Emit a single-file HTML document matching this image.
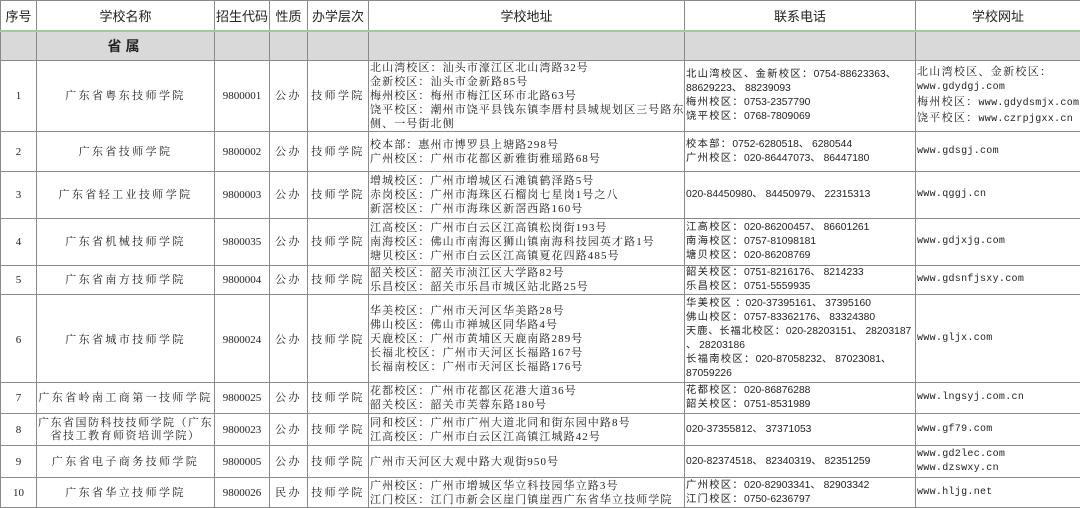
<!DOCTYPE html>
<html><head><meta charset="utf-8"><style>
html,body{margin:0;padding:0;background:#fff;width:1080px;height:503px;overflow:hidden}
table{border-collapse:collapse;table-layout:fixed;position:absolute;left:0;top:0;width:1080px}
td{border:1px solid #8a8a8a;padding:0 1px;font:11px/14px "Liberation Serif","Noto Serif CJK SC","Noto Sans CJK SC",serif;color:#222;vertical-align:middle;overflow:hidden;white-space:nowrap;box-sizing:border-box}
.c{text-align:center}
.h td{font:13px "Liberation Sans","Noto Sans CJK SC",sans-serif;text-align:center;color:#222;border-bottom:2px solid #9ccc9c}
.g td{background:#d9d9d9}
.a{letter-spacing:1.1px}
.n{letter-spacing:2.4px}
.u{font-family:"Liberation Mono","Noto Sans CJK SC",monospace;font-size:10px;letter-spacing:0.3px}
.ph{font-family:"Liberation Sans","Noto Sans CJK SC",sans-serif;font-size:10.3px}
.ph .a{letter-spacing:1.3px}
td.gl{border-left:1px solid #7cb87c}
.s{font-family:'Liberation Serif','Noto Serif CJK SC',serif;font-size:11px;letter-spacing:1.3px}
</style></head><body>
<table>
<colgroup><col style="width:36px"><col style="width:178px"><col style="width:55px"><col style="width:38px"><col style="width:61px"><col style="width:316px"><col style="width:231px"><col style="width:165px"></colgroup>
<tr class="h" style="height:30px"><td>序号</td><td>学校名称</td><td class="gl">招生代码</td><td>性质</td><td>办学层次</td><td>学校地址</td><td>联系电话</td><td>学校网址</td></tr>
<tr class="g" style="height:30px"><td></td><td class="c" style="font:bold 14px 'Noto Sans CJK SC',sans-serif;letter-spacing:4px">省属</td><td class="gl"></td><td></td><td></td><td></td><td></td><td></td></tr>
<tr style="height:71px"><td class="c">1</td><td class="c n">广东省粤东技师学院</td><td class="c gl">9800001</td><td class="c n">公办</td><td class="c n">技师学院</td><td class="a">北山湾校区：汕头市濠江区北山湾路32号<br>金新校区：汕头市金新路85号<br>梅州校区：梅州市梅江区环市北路63号<br>饶平校区：潮州市饶平县钱东镇李厝村县城规划区三号路东<br>侧、一号街北侧</td><td class="ph"><span class="a">北山湾校区、金新校区：</span>0754-88623363、<br>88629223、 88239093<br><span class="a">梅州校区：</span>0753-2357790<br><span class="a">饶平校区：</span>0768-7809069</td><td class="u"><span class="s">北山湾校区、金新校区：</span><br>www.gdydgj.com<br><span class="s">梅州校区：</span>www.gdydsmjx.com<br><span class="s">饶平校区：</span>www.czrpjgxx.cn</td></tr>
<tr style="height:40px"><td class="c">2</td><td class="c n">广东省技师学院</td><td class="c gl">9800002</td><td class="c n">公办</td><td class="c n">技师学院</td><td class="a">校本部：惠州市博罗县上塘路298号<br>广州校区：广州市花都区新雅街雅瑶路68号</td><td class="ph"><span class="a">校本部：</span>0752-6280518、 6280544<br><span class="a">广州校区：</span>020-86447073、 86447180</td><td class="u">www.gdsgj.com</td></tr>
<tr style="height:47px"><td class="c">3</td><td class="c n">广东省轻工业技师学院</td><td class="c gl">9800003</td><td class="c n">公办</td><td class="c n">技师学院</td><td class="a">增城校区：广州市增城区石滩镇鹤泽路5号<br>赤岗校区：广州市海珠区石榴岗七星岗1号之八<br>新滘校区：广州市海珠区新滘西路160号</td><td class="ph">020-84450980、 84450979、 22315313</td><td class="u">www.qggj.cn</td></tr>
<tr style="height:47px"><td class="c">4</td><td class="c n">广东省机械技师学院</td><td class="c gl">9800035</td><td class="c n">公办</td><td class="c n">技师学院</td><td class="a">江高校区：广州市白云区江高镇松岗街193号<br>南海校区：佛山市南海区狮山镇南海科技园英才路1号<br>塘贝校区：广州市白云区江高镇夏花四路485号</td><td class="ph"><span class="a">江高校区：</span>020-86200457、 86601261<br><span class="a">南海校区：</span>0757-81098181<br><span class="a">塘贝校区：</span>020-86208769</td><td class="u">www.gdjxjg.com</td></tr>
<tr style="height:29px"><td class="c">5</td><td class="c n">广东省南方技师学院</td><td class="c gl">9800004</td><td class="c n">公办</td><td class="c n">技师学院</td><td class="a">韶关校区：韶关市浈江区大学路82号<br>乐昌校区：韶关市乐昌市城区站北路25号</td><td class="ph"><span class="a">韶关校区：</span>0751-8216176、 8214233<br><span class="a">乐昌校区：</span>0751-5559935</td><td class="u">www.gdsnfjsxy.com</td></tr>
<tr style="height:88px"><td class="c" style="vertical-align:top;padding-top:38px">6</td><td class="c n" style="vertical-align:top;padding-top:38px">广东省城市技师学院</td><td class="c gl" style="vertical-align:top;padding-top:38px">9800024</td><td class="c n" style="vertical-align:top;padding-top:38px">公办</td><td class="c n" style="vertical-align:top;padding-top:38px">技师学院</td><td class="a">华美校区：广州市天河区华美路28号<br>佛山校区：佛山市禅城区同华路4号<br>天鹿校区：广州市黄埔区天鹿南路289号<br>长福北校区：广州市天河区长福路167号<br>长福南校区：广州市天河区长福路176号</td><td class="ph"><span class="a">华美校区</span> ：020-37395161、 37395160<br><span class="a">佛山校区：</span>0757-83362176、 83324380<br><span style="letter-spacing:0.8px">天鹿、长福北校区：</span>020-28203151、 28203187<br>、 28203186<br><span class="a">长福南校区：</span>020-87058232、 87023081、<br>87059226</td><td class="u">www.gljx.com</td></tr>
<tr style="height:31px"><td class="c">7</td><td class="c n">广东省岭南工商第一技师学院</td><td class="c gl">9800025</td><td class="c n">公办</td><td class="c n">技师学院</td><td class="a">花都校区：广州市花都区花港大道36号<br>韶关校区：韶关市芙蓉东路180号</td><td class="ph"><span class="a">花都校区：</span>020-86876288<br><span class="a">韶关校区：</span>0751-8531989</td><td class="u">www.lngsyj.com.cn</td></tr>
<tr style="height:32px"><td class="c">8</td><td class="c" style="letter-spacing:1.5px;line-height:13px">广东省国防科技技师学院（广东<br>省技工教育师资培训学院）</td><td class="c gl">9800023</td><td class="c n">公办</td><td class="c n">技师学院</td><td class="a">同和校区：广州市广州大道北同和街东园中路8号<br>江高校区：广州市白云区江高镇江城路42号</td><td class="ph">020-37355812、 37371053</td><td class="u">www.gf79.com</td></tr>
<tr style="height:32px"><td class="c">9</td><td class="c n">广东省电子商务技师学院</td><td class="c gl">9800005</td><td class="c n">公办</td><td class="c n">技师学院</td><td class="a">广州市天河区大观中路大观街950号</td><td class="ph">020-82374518、 82340319、 82351259</td><td class="u">www.gd2lec.com<br>www.dzswxy.cn</td></tr>
<tr style="height:30px"><td class="c">10</td><td class="c n">广东省华立技师学院</td><td class="c gl">9800026</td><td class="c n">民办</td><td class="c n">技师学院</td><td class="a">广州校区：广州市增城区华立科技园华立路3号<br>江门校区：江门市新会区崖门镇崖西广东省华立技师学院</td><td class="ph"><span class="a">广州校区：</span>020-82903341、 82903342<br><span class="a">江门校区：</span>0750-6236797</td><td class="u">www.hljg.net</td></tr>
</table>
</body></html>
